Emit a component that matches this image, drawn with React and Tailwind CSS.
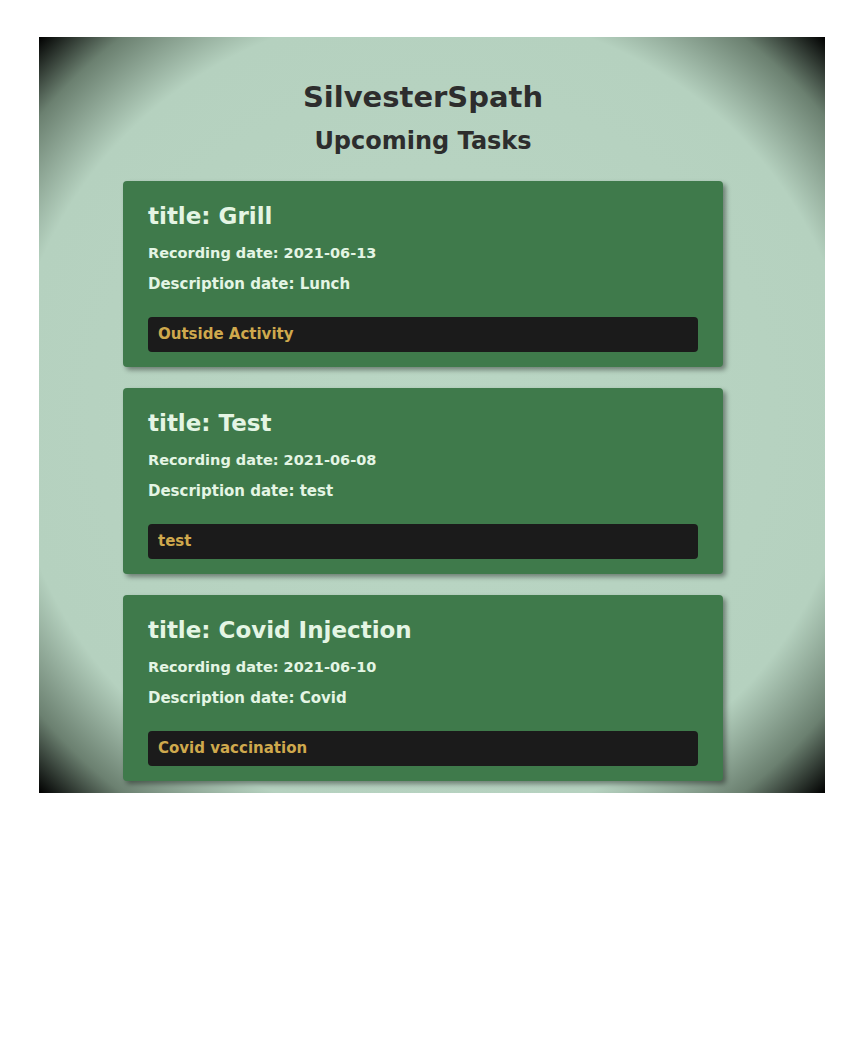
const tasks = [
  { id: 1, title: 'Grill', recorded: '2021-06-13', description: 'Lunch', tag: 'Outside Activity' },
  { id: 2, title: 'Test', recorded: '2021-06-08', description: 'test', tag: 'test' },
  { id: 3, title: 'Covid Injection', recorded: '2021-06-10', description: 'Covid', tag: 'Covid vaccination' },
];

function TaskCard({ task }) {
  return (
    <div className="w-[600px] rounded-[4px] bg-[#3f7a4b] px-[25px] pt-[20px] pb-[15px] text-[#e4f5e4] shadow-[3px_3px_5px_rgba(0,0,0,0.4)]">
      <h3 className="text-[23px] font-bold leading-[30px]">title: {task.title}</h3>
      <p className="mt-[12px] text-[14.5px] font-bold leading-[20px]">Recording date: {task.recorded}</p>
      <p className="mt-[11px] text-[15px] font-bold leading-[20px]">Description date: {task.description}</p>
      <div className="mt-[23px] flex h-[35px] items-center rounded-[4px] bg-[#1b1b1b] px-[10px] text-[15px] font-bold text-[#cfa94d]">
        {task.tag}
      </div>
    </div>
  );
}

export default function App() {
  return (
    <div className="min-h-[1056px] bg-white pt-[37px] pl-[39px] font-['DejaVu_Sans',sans-serif]">
      <div className="h-[756px] w-[786px] overflow-hidden bg-[radial-gradient(ellipse_at_center,#bad6c4_0%,#b5d1bf_76%,#6b8070_90%,#000_100%)] pr-[18px] pt-[40px]">
        <div className="flex flex-col items-center">
          <h1 className="text-[29px] font-bold leading-[40px] text-[#2d2d2d]">SilvesterSpath</h1>
          <h2 className="mt-[9px] text-[24px] font-bold leading-[30px] text-[#2d2d2d]">Upcoming Tasks</h2>
          <div className="mt-[25px] flex flex-col gap-[21px]">
            {tasks.map((task) => (
              <TaskCard key={task.id} task={task} />
            ))}
          </div>
        </div>
      </div>
    </div>
  );
}
